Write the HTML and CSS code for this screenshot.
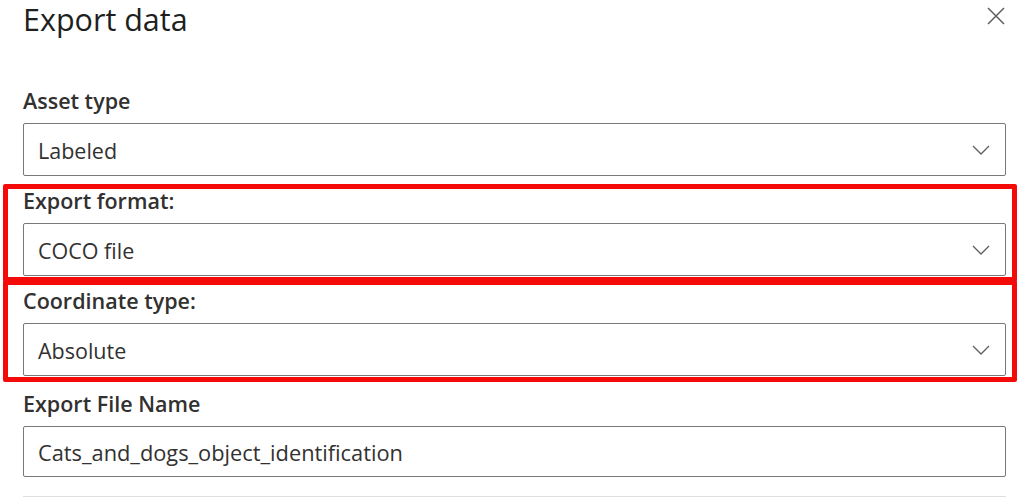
FILE: index.html
```html
<!DOCTYPE html>
<html lang="en">
<head>
  <meta charset="UTF-8">
  <meta name="viewport" content="width=device-width, initial-scale=1.0">
  <title>Export data</title>
  <link rel="stylesheet" href="styles.css">
</head>
<body>

  <div class="panel">

    <div class="panel-header">
      <h1 class="panel-title">Export data</h1>
      <button class="close-btn" aria-label="Close">
        <svg width="18" height="18" viewBox="0 0 18 18">
          <path d="M1 1 L17 17 M17 1 L1 17" stroke="#5f5e5c" stroke-width="1.5" fill="none"/>
        </svg>
      </button>
    </div>

    <div class="fields">

      <div class="field">
        <label class="field-label">Asset type</label>
        <div class="dropdown">
          <span>Labeled</span>
          <svg class="chevron" width="18" height="10" viewBox="0 0 18 10">
            <path d="M1 1 L9 9 L17 1" stroke="#605e5c" stroke-width="1.3" fill="none"/>
          </svg>
        </div>
      </div>

      <!-- highlighted in the docs screenshot -->
      <div class="field highlight hl-first">
        <label class="field-label">Export format:</label>
        <div class="dropdown">
          <span>COCO file</span>
          <svg class="chevron" width="18" height="10" viewBox="0 0 18 10">
            <path d="M1 1 L9 9 L17 1" stroke="#605e5c" stroke-width="1.3" fill="none"/>
          </svg>
        </div>
      </div>

      <div class="field highlight hl-second">
        <label class="field-label">Coordinate type:</label>
        <div class="dropdown">
          <span>Absolute</span>
          <svg class="chevron" width="18" height="10" viewBox="0 0 18 10">
            <path d="M1 1 L9 9 L17 1" stroke="#605e5c" stroke-width="1.3" fill="none"/>
          </svg>
        </div>
      </div>

      <div class="field field-last">
        <label class="field-label" for="fileName">Export File Name</label>
        <input type="text" id="fileName" class="text-input" value="Cats_and_dogs_object_identification">
      </div>

    </div>

    <div class="next-row"></div>

  </div>

</body>
</html>
```

FILE: styles.css
```css
body {
  margin: 0;
  font-family: 'Open Sans', 'Noto Sans', sans-serif;
  background-color: #fff;
  color: #323130;
}

.panel {
  padding: 0 18px 0 23px;
}

.panel-header {
  display: flex;
  justify-content: space-between;
  align-items: flex-start;
  height: 87px;
}

.panel-title {
  margin: -2px 0 0 0;
  font-size: 30.5px;
  line-height: 42px;
  font-weight: 400;
  color: #201f1e;
}

.close-btn {
  background: none;
  border: none;
  padding: 0;
  margin: 7px 1px 0 0;
  width: 18px;
  height: 18px;
  cursor: pointer;
}

.close-btn svg {
  display: block;
}

.fields {
  display: flex;
  flex-direction: column;
  gap: 11px;
}

.field {
  display: flex;
  flex-direction: column;
  gap: 8px;
}

.field-last {
  margin-top: 3px;
}

.field-label {
  font-size: 21.5px;
  line-height: 27px;
  margin-bottom: 1px;
  font-weight: 600;
  color: #323130;
}

.dropdown {
  height: 53px;
  box-sizing: border-box;
  border: 1px solid #7a7876;
  border-radius: 2px;
  display: flex;
  align-items: center;
  justify-content: space-between;
  padding: 2px 15px 0 14px;
  font-size: 21.5px;
  color: #323130;
}

.chevron {
  display: block;
  margin-top: -2px;
}

.text-input {
  height: 51px;
  box-sizing: border-box;
  width: 100%;
  border: 1px solid #7a7876;
  border-radius: 2px;
  padding: 2px 14px 0 14px;
  font-family: inherit;
  font-size: 21.8px;
  color: #323130;
  outline: none;
}

.next-row {
  margin-top: 19px;
  border-top: 1px solid #e1dfdd;
  height: 10px;
}

/* red annotation frames drawn over the form */
.highlight {
  position: relative;
}

.highlight::after {
  content: '';
  position: absolute;
  left: -20px;
  right: -11px;
  border: 5px solid #f50a0a;
  border-radius: 2px;
  pointer-events: none;
}

.hl-first::after {
  top: -3px;
  bottom: -6px;
}

.hl-second::after {
  top: -7px;
  bottom: -6px;
}
```
